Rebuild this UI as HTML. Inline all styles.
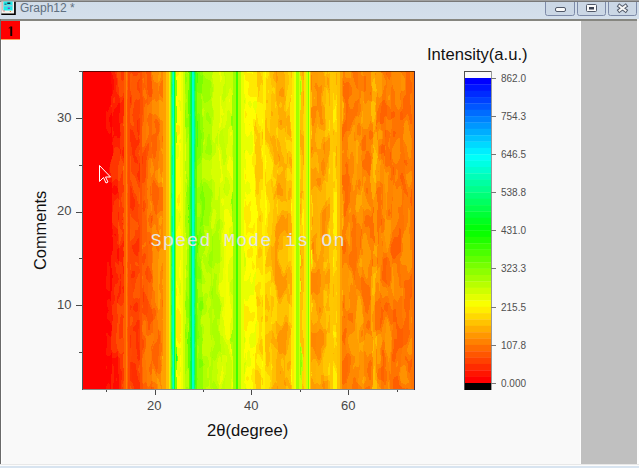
<!DOCTYPE html>
<html><head><meta charset="utf-8">
<style>
html,body{margin:0;padding:0;}
body{width:639px;height:468px;overflow:hidden;position:relative;background:#f9f9f9;font-family:"Liberation Sans",sans-serif;}
.abs{position:absolute;}
#title{left:0;top:0;width:639px;height:19px;background:linear-gradient(#d0dce9,#d4dfeb);border-top:1px solid #a0a0a0;box-sizing:border-box;}
#title2{left:0;top:1px;width:639px;height:1px;background:#787878;}
#titleline{left:0;top:19px;width:637px;height:2px;background:#868680;}
#ttext{left:20px;top:1px;font-size:12px;color:#5f6f80;white-space:nowrap;}
.btn{top:1px;height:15px;border:1px solid #9aa6b4;border-top:none;border-radius:0 0 3px 3px;background:linear-gradient(#d6e1ee,#c8d5e4);box-sizing:border-box;}
#leftb{left:0;top:19px;width:1px;height:445px;background:#6a6a6a;}
#leftw{left:1px;top:39px;width:1px;height:425px;background:#fff;}
#gray{left:581px;top:21px;width:56px;height:443px;background:#c0c0c0;}
#grayw{left:580px;top:21px;width:1px;height:443px;background:#fefefe;}
#rightw{left:637px;top:21px;width:2px;height:443px;background:#fdfdfd;}
#bottom{left:0;top:464px;width:639px;height:4px;background:linear-gradient(#e8e8e8 0,#e8e8e8 1px,#fcfcfc 1px,#fcfcfc 2px,#d8e4f0 2px);}
#red1{left:1px;top:21px;width:19px;height:19px;background:#ff0000;border-bottom:1px solid #ffa060;box-sizing:border-box;}
.tl{font-size:13px;color:#484848;white-space:nowrap;}
.cl{font-size:10px;color:#505050;white-space:nowrap;}
.tick{background:#4a4a4a;}
</style></head><body>
<div class="abs" id="title"></div><div class="abs" id="title2"></div>
<div class="abs" id="titleline"></div>
<svg class="abs" style="left:0;top:0" width="18" height="18" viewBox="0 0 18 18">
<rect x="1.3" y="2" width="14.5" height="13" fill="#000"/>
<rect x="1.2" y="1.5" width="12.9" height="12" fill="#f4f2ee"/>
<rect x="2" y="1.5" width="0.7" height="9" fill="#e0a0a0"/>
<rect x="3.4" y="1.5" width="9.2" height="9" fill="#20e8e8"/>
<rect x="3.4" y="5.2" width="9.2" height="1.2" fill="#a0c8d8"/>
<rect x="7.3" y="2.5" width="3" height="1.5" fill="#102030"/>
<rect x="4.5" y="3.6" width="2" height="1.2" fill="#2a6a80"/>
<rect x="7.8" y="7.6" width="2" height="1.4" fill="#8040c0"/>
<rect x="3.4" y="10.5" width="1.2" height="1" fill="#e04040"/>
<rect x="9.8" y="11" width="1.2" height="1" fill="#e0a040"/>
</svg>
<div class="abs" id="ttext">Graph12 *</div>
<svg class="abs" style="left:540px;top:0" width="99" height="19" viewBox="0 0 99 19">
<g fill="#cbd7e5" stroke="#7d8aa8" stroke-width="1">
<path d="M5.5 2 V13.5 Q5.5 15.5 7.5 15.5 H32.5 Q34.5 15.5 34.5 13.5 V2"/>
<path d="M37.5 2 V13.5 Q37.5 15.5 39.5 15.5 H63.5 Q65.5 15.5 65.5 13.5 V2"/>
<path d="M68.5 2 V13.5 Q68.5 15.5 70.5 15.5 H94.5 Q96.5 15.5 96.5 13.5 V2"/>
</g>
<rect x="15.5" y="7.5" width="10" height="4" rx="1.5" fill="#fafafa" stroke="#505868" stroke-width="1"/>
<rect x="46.5" y="4.5" width="10" height="7" rx="1" fill="#fafafa" stroke="#505868" stroke-width="1"/>
<rect x="49" y="7" width="5" height="2.5" fill="#3a4050"/>
<path d="M79.5 6 L85.5 10.5 M85.5 6 L79.5 10.5" stroke="#505868" stroke-width="4" stroke-linecap="square"/>
<path d="M79.5 6 L85.5 10.5 M85.5 6 L79.5 10.5" stroke="#f6f6f6" stroke-width="2" stroke-linecap="square"/>
</svg>
<div class="abs" id="leftb"></div><div class="abs" id="leftw"></div><div class="abs" id="rightw"></div><div class="abs" id="grayw"></div>
<div class="abs" id="gray"></div>
<div class="abs" id="bottom"></div>
<div class="abs" id="red1"><svg class="abs" style="left:0;top:0" width="19" height="19"><rect x="9.3" y="5.5" width="1.9" height="9.5" fill="#100"/><path d="M7.2 7.2 L9.5 5.5 L9.5 7.5 Z" fill="#400"/></svg></div>

<!-- plot -->
<svg class="abs" style="left:82px;top:71px" width="333" height="319" viewBox="0 0 333 319">
<defs><filter id="wob" x="-5%" y="-5%" width="110%" height="110%" color-interpolation-filters="sRGB"><feTurbulence type="fractalNoise" baseFrequency="0.07 0.025" numOctaves="2" seed="3" result="t"/><feDisplacementMap in="SourceGraphic" in2="t" scale="9" xChannelSelector="R" yChannelSelector="G" result="d"/><feTurbulence type="fractalNoise" baseFrequency="0.1 0.035" numOctaves="2" seed="17" result="t2"/><feComponentTransfer in="t2" result="m1"><feFuncA type="discrete" tableValues="0 0 0 0 1 1 1"/></feComponentTransfer><feComponentTransfer in="t2" result="m2"><feFuncA type="discrete" tableValues="1 1 1 0 0 0 0"/></feComponentTransfer><feColorMatrix in="d" type="matrix" values="1 -20 0 0 19.915  -20 1 0 0 20.085  0 0 1 0 0  0 0 0 1 0" result="h1" color-interpolation-filters="sRGB"/><feColorMatrix in="d" type="matrix" values="1 -20 0 0 20.085  -20 1 0 0 19.915  0 0 1 0 0  0 0 0 1 0" result="h2" color-interpolation-filters="sRGB"/><feComposite in="h1" in2="m1" operator="in" result="hm1"/><feComposite in="h2" in2="m2" operator="in" result="hm2"/><feMerge><feMergeNode in="d"/><feMergeNode in="hm1"/><feMergeNode in="hm2"/></feMerge></filter><clipPath id="pc"><rect x="0" y="0" width="332" height="318"/></clipPath></defs><g clip-path="url(#pc)"><g filter="url(#wob)"><rect x="-4.0" y="-10" width="34.0" height="340" fill="#ff0000"/>
<rect x="30.0" y="-10" width="7.0" height="340" fill="#ff2000"/>
<rect x="37.0" y="-10" width="5.0" height="340" fill="#ff3800"/>
<rect x="42.0" y="-10" width="2.0" height="340" fill="#ff6000"/>
<rect x="44.0" y="-10" width="1.5" height="340" fill="#ff8000"/>
<rect x="45.5" y="-10" width="2.5" height="340" fill="#ff4800"/>
<rect x="48.0" y="-10" width="10.0" height="340" fill="#ff4400"/>
<rect x="58.0" y="-10" width="2.0" height="340" fill="#ff5000"/>
<rect x="60.0" y="-10" width="5.0" height="340" fill="#ff6000"/>
<rect x="65.0" y="-10" width="5.0" height="340" fill="#ff6800"/>
<rect x="70.0" y="-10" width="6.0" height="340" fill="#ff7800"/>
<rect x="76.0" y="-10" width="5.0" height="340" fill="#ff8800"/>
<rect x="81.0" y="-10" width="3.0" height="340" fill="#ffa000"/>
<rect x="84.0" y="-10" width="3.0" height="340" fill="#ffc000"/>
<rect x="87.0" y="-10" width="1.0" height="340" fill="#f0f000"/>
<rect x="88.0" y="-10" width="1.5" height="340" fill="#a0ff00"/>
<rect x="89.5" y="-10" width="1.0" height="340" fill="#00ff40"/>
<rect x="90.5" y="-10" width="1.5" height="340" fill="#00ffd0"/>
<rect x="92.0" y="-10" width="1.0" height="340" fill="#00ff40"/>
<rect x="93.0" y="-10" width="1.0" height="340" fill="#80ff00"/>
<rect x="94.0" y="-10" width="5.0" height="340" fill="#ffff00"/>
<rect x="99.0" y="-10" width="2.0" height="340" fill="#f0ff00"/>
<rect x="101.0" y="-10" width="2.0" height="340" fill="#d0ff00"/>
<rect x="103.0" y="-10" width="4.0" height="340" fill="#a0ff00"/>
<rect x="107.0" y="-10" width="1.5" height="340" fill="#60ff00"/>
<rect x="108.5" y="-10" width="1.5" height="340" fill="#00ff40"/>
<rect x="110.0" y="-10" width="2.5" height="340" fill="#00ffd0"/>
<rect x="112.5" y="-10" width="1.0" height="340" fill="#00ff40"/>
<rect x="113.5" y="-10" width="1.5" height="340" fill="#60ff00"/>
<rect x="115.0" y="-10" width="6.0" height="340" fill="#90ff00"/>
<rect x="121.0" y="-10" width="9.0" height="340" fill="#b0ff00"/>
<rect x="130.0" y="-10" width="8.0" height="340" fill="#c0ff00"/>
<rect x="138.0" y="-10" width="5.0" height="340" fill="#d8ff00"/>
<rect x="143.0" y="-10" width="8.0" height="340" fill="#e0ff00"/>
<rect x="151.0" y="-10" width="3.0" height="340" fill="#a0ff00"/>
<rect x="154.0" y="-10" width="2.0" height="340" fill="#40ff00"/>
<rect x="156.0" y="-10" width="3.0" height="340" fill="#b0ff00"/>
<rect x="159.0" y="-10" width="3.0" height="340" fill="#e8ff00"/>
<rect x="162.0" y="-10" width="12.0" height="340" fill="#ffff00"/>
<rect x="174.0" y="-10" width="7.0" height="340" fill="#ffdc00"/>
<rect x="181.0" y="-10" width="2.0" height="340" fill="#fff000"/>
<rect x="183.0" y="-10" width="7.0" height="340" fill="#ffd000"/>
<rect x="190.0" y="-10" width="5.0" height="340" fill="#ffc000"/>
<rect x="195.0" y="-10" width="10.0" height="340" fill="#ffac00"/>
<rect x="205.0" y="-10" width="5.0" height="340" fill="#ffc000"/>
<rect x="210.0" y="-10" width="2.0" height="340" fill="#ffe800"/>
<rect x="212.0" y="-10" width="2.0" height="340" fill="#f0ff00"/>
<rect x="214.0" y="-10" width="3.0" height="340" fill="#a0ff00"/>
<rect x="217.0" y="-10" width="1.0" height="340" fill="#d0ff00"/>
<rect x="218.0" y="-10" width="4.0" height="340" fill="#ffc000"/>
<rect x="222.0" y="-10" width="2.0" height="340" fill="#ffe000"/>
<rect x="224.0" y="-10" width="2.0" height="340" fill="#d0ff00"/>
<rect x="226.0" y="-10" width="1.0" height="340" fill="#80ff00"/>
<rect x="227.0" y="-10" width="1.0" height="340" fill="#f0ff00"/>
<rect x="228.0" y="-10" width="1.0" height="340" fill="#ffc000"/>
<rect x="229.0" y="-10" width="6.0" height="340" fill="#ff9c00"/>
<rect x="235.0" y="-10" width="8.0" height="340" fill="#ffa000"/>
<rect x="243.0" y="-10" width="5.0" height="340" fill="#ffb000"/>
<rect x="248.0" y="-10" width="3.0" height="340" fill="#ffc800"/>
<rect x="251.0" y="-10" width="4.0" height="340" fill="#ffdc00"/>
<rect x="255.0" y="-10" width="3.0" height="340" fill="#ffc000"/>
<rect x="258.0" y="-10" width="2.0" height="340" fill="#ffa000"/>
<rect x="260.0" y="-10" width="6.0" height="340" fill="#ff8000"/>
<rect x="266.0" y="-10" width="9.0" height="340" fill="#ff8800"/>
<rect x="275.0" y="-10" width="6.0" height="340" fill="#ff9400"/>
<rect x="281.0" y="-10" width="9.0" height="340" fill="#ff8400"/>
<rect x="290.0" y="-10" width="4.0" height="340" fill="#ffa800"/>
<rect x="294.0" y="-10" width="5.0" height="340" fill="#ff8800"/>
<rect x="299.0" y="-10" width="5.0" height="340" fill="#ff7800"/>
<rect x="304.0" y="-10" width="6.0" height="340" fill="#ff8400"/>
<rect x="310.0" y="-10" width="10.0" height="340" fill="#ff7400"/>
<rect x="320.0" y="-10" width="10.0" height="340" fill="#ff7c00"/>
<rect x="330.0" y="-10" width="8.0" height="340" fill="#ff7400"/></g><rect x="42.0" y="0" width="2.0" height="318" fill="#ff6000"/>
<rect x="44.0" y="0" width="1.5" height="318" fill="#ff8000"/>
<rect x="45.5" y="0" width="2.5" height="318" fill="#ff4800"/>
<rect x="58.0" y="0" width="2.0" height="318" fill="#ff5000"/>
<rect x="81.0" y="0" width="3.0" height="318" fill="#ffa000"/>
<rect x="84.0" y="0" width="3.0" height="318" fill="#ffc000"/>
<rect x="87.0" y="0" width="1.0" height="318" fill="#f0f000"/>
<rect x="88.0" y="0" width="1.5" height="318" fill="#a0ff00"/>
<rect x="89.5" y="0" width="1.0" height="318" fill="#00ff40"/>
<rect x="90.5" y="0" width="1.5" height="318" fill="#00ffd0"/>
<rect x="92.0" y="0" width="1.0" height="318" fill="#00ff40"/>
<rect x="93.0" y="0" width="1.0" height="318" fill="#80ff00"/>
<rect x="99.0" y="0" width="2.0" height="318" fill="#f0ff00"/>
<rect x="101.0" y="0" width="2.0" height="318" fill="#d0ff00"/>
<rect x="107.0" y="0" width="1.5" height="318" fill="#60ff00"/>
<rect x="108.5" y="0" width="1.5" height="318" fill="#00ff40"/>
<rect x="110.0" y="0" width="2.5" height="318" fill="#00ffd0"/>
<rect x="112.5" y="0" width="1.0" height="318" fill="#00ff40"/>
<rect x="113.5" y="0" width="1.5" height="318" fill="#60ff00"/>
<rect x="151.0" y="0" width="3.0" height="318" fill="#a0ff00"/>
<rect x="154.0" y="0" width="2.0" height="318" fill="#40ff00"/>
<rect x="156.0" y="0" width="3.0" height="318" fill="#b0ff00"/>
<rect x="159.0" y="0" width="3.0" height="318" fill="#e8ff00"/>
<rect x="181.0" y="0" width="2.0" height="318" fill="#fff000"/>
<rect x="210.0" y="0" width="2.0" height="318" fill="#ffe800"/>
<rect x="212.0" y="0" width="2.0" height="318" fill="#f0ff00"/>
<rect x="214.0" y="0" width="3.0" height="318" fill="#a0ff00"/>
<rect x="217.0" y="0" width="1.0" height="318" fill="#d0ff00"/>
<rect x="222.0" y="0" width="2.0" height="318" fill="#ffe000"/>
<rect x="224.0" y="0" width="2.0" height="318" fill="#d0ff00"/>
<rect x="226.0" y="0" width="1.0" height="318" fill="#80ff00"/>
<rect x="227.0" y="0" width="1.0" height="318" fill="#f0ff00"/>
<rect x="228.0" y="0" width="1.0" height="318" fill="#ffc000"/>
<rect x="248.0" y="0" width="3.0" height="318" fill="#ffc800"/>
<rect x="255.0" y="0" width="3.0" height="318" fill="#ffc000"/>
<rect x="258.0" y="0" width="2.0" height="318" fill="#ffa000"/>
<rect x="330.0" y="0" width="2.0" height="318" fill="#ff7400"/><rect x="0" y="0" width="24" height="318" fill="#ff0000"/></g>
<rect x="0" y="0" width="333" height="1" fill="#000" fill-opacity="0.62"/>
<rect x="0" y="318" width="333" height="1" fill="#000" fill-opacity="0.45"/>
<rect x="0" y="0" width="1" height="319" fill="#4a5c5c"/>
<rect x="332" y="0" width="1" height="319" fill="#3a2a48"/>
</svg>
<!-- y ticks -->
<div class="abs tick" style="left:76px;top:118px;width:6px;height:1px"></div>
<div class="abs tick" style="left:76px;top:212px;width:6px;height:1px"></div>
<div class="abs tick" style="left:76px;top:305px;width:6px;height:1px"></div>
<div class="abs tick" style="left:79px;top:71px;width:3px;height:1px"></div>
<div class="abs tick" style="left:79px;top:165px;width:3px;height:1px"></div>
<div class="abs tick" style="left:79px;top:258px;width:3px;height:1px"></div>
<div class="abs tick" style="left:79px;top:352px;width:3px;height:1px"></div>
<div class="abs tl" style="left:57px;top:110px">30</div>
<div class="abs tl" style="left:57px;top:203px">20</div>
<div class="abs tl" style="left:57px;top:297px">10</div>
<!-- x ticks -->
<div class="abs tick" style="left:155px;top:390px;width:1px;height:5px;background:#4a4a4a"></div>
<div class="abs tick" style="left:251px;top:390px;width:1px;height:5px;background:#4a4a4a"></div>
<div class="abs tick" style="left:348px;top:390px;width:1px;height:5px;background:#4a4a4a"></div>
<div class="abs tick" style="left:106px;top:390px;width:1px;height:2px;background:#4a4a4a"></div>
<div class="abs tick" style="left:203px;top:390px;width:1px;height:2px;background:#4a4a4a"></div>
<div class="abs tick" style="left:300px;top:390px;width:1px;height:2px;background:#4a4a4a"></div>
<div class="abs tick" style="left:397px;top:390px;width:1px;height:2px;background:#4a4a4a"></div>
<div class="abs tl" style="left:147px;top:398px">20</div>
<div class="abs tl" style="left:244px;top:398px">40</div>
<div class="abs tl" style="left:341px;top:398px">60</div>
<div class="abs" style="left:207px;top:421px;font-size:16.6px;color:#111;white-space:nowrap">2θ(degree)</div>
<div class="abs" style="left:30.5px;top:270px;font-size:16.4px;color:#111;white-space:nowrap;transform-origin:0 0;transform:rotate(-90deg)">Comments</div>

<!-- colorbar -->
<svg class="abs" style="left:464px;top:71px" width="28" height="319" viewBox="0 0 28 319">
<rect x="0" y="0" width="28" height="7" fill="#fafafa"/>
<rect x="0" y="7.00" width="27" height="6.65" fill="#0000ff"/>
<rect x="0" y="13.35" width="27" height="6.65" fill="#0015ff"/>
<rect x="0" y="19.71" width="27" height="6.65" fill="#002bff"/>
<rect x="0" y="26.06" width="27" height="6.65" fill="#0041ff"/>
<rect x="0" y="32.42" width="27" height="6.65" fill="#0056ff"/>
<rect x="0" y="38.77" width="27" height="6.65" fill="#006cff"/>
<rect x="0" y="45.12" width="27" height="6.65" fill="#0082ff"/>
<rect x="0" y="51.48" width="27" height="6.65" fill="#0097ff"/>
<rect x="0" y="57.83" width="27" height="6.65" fill="#00adff"/>
<rect x="0" y="64.19" width="27" height="6.65" fill="#00c3ff"/>
<rect x="0" y="70.54" width="27" height="6.65" fill="#00d9ff"/>
<rect x="0" y="76.90" width="27" height="6.65" fill="#00eeff"/>
<rect x="0" y="83.25" width="27" height="6.65" fill="#00fff9"/>
<rect x="0" y="89.60" width="27" height="6.65" fill="#00ffe3"/>
<rect x="0" y="95.96" width="27" height="6.65" fill="#00ffce"/>
<rect x="0" y="102.31" width="27" height="6.65" fill="#00ffb8"/>
<rect x="0" y="108.67" width="27" height="6.65" fill="#00ffa2"/>
<rect x="0" y="115.02" width="27" height="6.65" fill="#00ff8d"/>
<rect x="0" y="121.38" width="27" height="6.65" fill="#00ff77"/>
<rect x="0" y="127.73" width="27" height="6.65" fill="#00ff61"/>
<rect x="0" y="134.08" width="27" height="6.65" fill="#00ff4b"/>
<rect x="0" y="140.44" width="27" height="6.65" fill="#00ff36"/>
<rect x="0" y="146.79" width="27" height="6.65" fill="#00ff20"/>
<rect x="0" y="153.15" width="27" height="6.65" fill="#00ff0a"/>
<rect x="0" y="159.50" width="27" height="6.65" fill="#0aff00"/>
<rect x="0" y="165.85" width="27" height="6.65" fill="#20ff00"/>
<rect x="0" y="172.21" width="27" height="6.65" fill="#36ff00"/>
<rect x="0" y="178.56" width="27" height="6.65" fill="#4bff00"/>
<rect x="0" y="184.92" width="27" height="6.65" fill="#61ff00"/>
<rect x="0" y="191.27" width="27" height="6.65" fill="#77ff00"/>
<rect x="0" y="197.62" width="27" height="6.65" fill="#8dff00"/>
<rect x="0" y="203.98" width="27" height="6.65" fill="#a2ff00"/>
<rect x="0" y="210.33" width="27" height="6.65" fill="#b8ff00"/>
<rect x="0" y="216.69" width="27" height="6.65" fill="#ceff00"/>
<rect x="0" y="223.04" width="27" height="6.65" fill="#e3ff00"/>
<rect x="0" y="229.40" width="27" height="6.65" fill="#f9ff00"/>
<rect x="0" y="235.75" width="27" height="6.65" fill="#ffee00"/>
<rect x="0" y="242.10" width="27" height="6.65" fill="#ffd900"/>
<rect x="0" y="248.46" width="27" height="6.65" fill="#ffc300"/>
<rect x="0" y="254.81" width="27" height="6.65" fill="#ffad00"/>
<rect x="0" y="261.17" width="27" height="6.65" fill="#ff9700"/>
<rect x="0" y="267.52" width="27" height="6.65" fill="#ff8200"/>
<rect x="0" y="273.88" width="27" height="6.65" fill="#ff6c00"/>
<rect x="0" y="280.23" width="27" height="6.65" fill="#ff5600"/>
<rect x="0" y="286.58" width="27" height="6.65" fill="#ff4100"/>
<rect x="0" y="292.94" width="27" height="6.65" fill="#ff2b00"/>
<rect x="0" y="299.29" width="27" height="6.65" fill="#ff1500"/>
<rect x="0" y="305.65" width="27" height="6.65" fill="#ff0000"/>
<rect x="0" y="312" width="28" height="7" fill="#000"/>
<rect x="0" y="0" width="28" height="1" fill="#505050"/>
<rect x="0" y="0" width="1" height="319" fill="#505050"/>
<rect x="27" y="0" width="1" height="319" fill="#9a9a9a"/>
</svg>
<div class="abs" style="left:427px;top:45px;font-size:16.6px;color:#111;white-space:nowrap">Intensity(a.u.)</div>
<div class="abs tick" style="left:491px;top:78px;width:5px;height:1px;background:#777"></div>
<div class="abs tick" style="left:491px;top:116px;width:5px;height:1px;background:#777"></div>
<div class="abs tick" style="left:491px;top:154px;width:5px;height:1px;background:#777"></div>
<div class="abs tick" style="left:491px;top:192px;width:5px;height:1px;background:#777"></div>
<div class="abs tick" style="left:491px;top:230px;width:5px;height:1px;background:#777"></div>
<div class="abs tick" style="left:491px;top:268px;width:5px;height:1px;background:#777"></div>
<div class="abs tick" style="left:491px;top:307px;width:5px;height:1px;background:#777"></div>
<div class="abs tick" style="left:491px;top:345px;width:5px;height:1px;background:#777"></div>
<div class="abs tick" style="left:491px;top:383px;width:5px;height:1px;background:#777"></div>
<div class="abs cl" style="left:501px;top:73px">862.0</div>
<div class="abs cl" style="left:501px;top:111px">754.3</div>
<div class="abs cl" style="left:501px;top:149px">646.5</div>
<div class="abs cl" style="left:501px;top:187px">538.8</div>
<div class="abs cl" style="left:501px;top:225px">431.0</div>
<div class="abs cl" style="left:501px;top:263px">323.3</div>
<div class="abs cl" style="left:501px;top:302px">215.5</div>
<div class="abs cl" style="left:501px;top:340px">107.8</div>
<div class="abs cl" style="left:501px;top:378px">0.000</div>

<div class="abs" style="left:150.5px;top:230.5px;font-family:'Liberation Mono',monospace;font-size:18.5px;letter-spacing:1.1px;color:#e4e4e4;white-space:nowrap">Speed Mode is On</div>
<svg class="abs" style="left:98px;top:164px" width="14" height="21" viewBox="0 0 14 21">
<path d="M1.5 1.5 L1.5 17.5 L5.5 13.5 L8 19 L10 18 L7.5 13 L12.5 13 Z" fill="none" stroke="#fff" stroke-width="1"/>
</svg>
</body></html>
